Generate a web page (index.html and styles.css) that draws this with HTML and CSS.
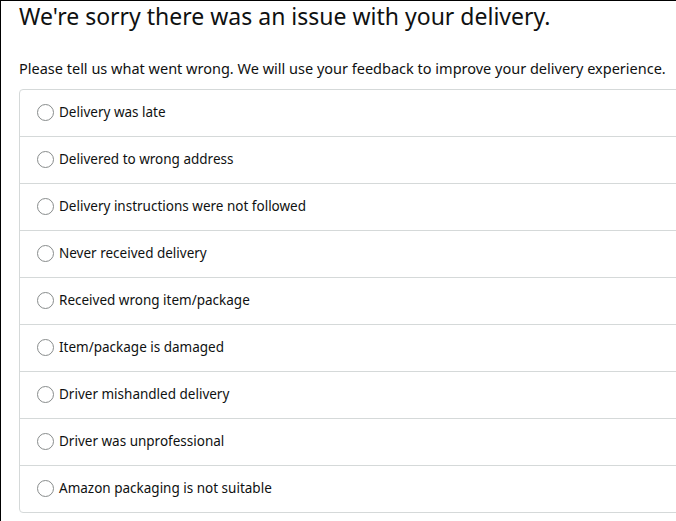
FILE: index.html
```html
<!DOCTYPE html>
<html lang="en">
<head>
    <meta charset="UTF-8">
    <meta name="viewport" content="width=device-width, initial-scale=1.0">
    <title>Delivery feedback</title>
    <link rel="stylesheet" href="styles.css">
</head>
<body>
    <div class="page">
        <h1 class="title">We're sorry there was an issue with your delivery.</h1>
        <p class="intro">Please tell us what went wrong. We will use your feedback to improve your delivery experience.</p>

        <!-- Reasons list -->
        <form class="reasons">
            <label class="reason"><input type="radio" name="reason"><span class="radio"></span>Delivery was late</label>
            <label class="reason"><input type="radio" name="reason"><span class="radio"></span>Delivered to wrong address</label>
            <label class="reason"><input type="radio" name="reason"><span class="radio"></span>Delivery instructions were not followed</label>
            <label class="reason"><input type="radio" name="reason"><span class="radio"></span>Never received delivery</label>
            <label class="reason"><input type="radio" name="reason"><span class="radio"></span>Received wrong item/package</label>
            <label class="reason"><input type="radio" name="reason"><span class="radio"></span>Item/package is damaged</label>
            <label class="reason"><input type="radio" name="reason"><span class="radio"></span>Driver mishandled delivery</label>
            <label class="reason"><input type="radio" name="reason"><span class="radio"></span>Driver was unprofessional</label>
            <label class="reason"><input type="radio" name="reason"><span class="radio"></span>Amazon packaging is not suitable</label>
        </form>
    </div>
</body>
</html>
```

FILE: styles.css
```css
* {
    margin: 0;
    padding: 0;
    box-sizing: border-box;
}

body {
    background: #fff;
    font-family: 'Noto Sans', Arial, sans-serif;
    color: #0f1111;
    overflow: hidden;
}

.page {
    border-top: 1px solid #000;
    border-left: 1px solid #000;
    min-height: 100vh;
    padding: 0 0 0 18px;
    width: 700px;
}

.title {
    font-size: 23px;
    font-weight: normal;
    line-height: 30px;
}

.intro {
    font-size: 14.5px;
    line-height: 20px;
    margin-top: 27px;
    margin-bottom: 11px;
}

.reasons {
    border: 1px solid #d5d9d9;
    border-radius: 4px;
    width: 680px;
}

.reason {
    display: flex;
    align-items: center;
    height: 47px;
    padding-left: 17px;
    padding-bottom: 2px;
    font-size: 13.5px;
    border-top: 1px solid #d5d9d9;
    cursor: pointer;
}

.reason:first-child {
    border-top: none;
    height: 46px;
}

.reason input {
    display: none;
}

.radio {
    width: 17px;
    height: 17px;
    border: 1px solid #888c8c;
    border-radius: 50%;
    margin-right: 5px;
    background: #fff;
}

.reason input:checked + .radio {
    border: 5px solid #007185;
}
```
